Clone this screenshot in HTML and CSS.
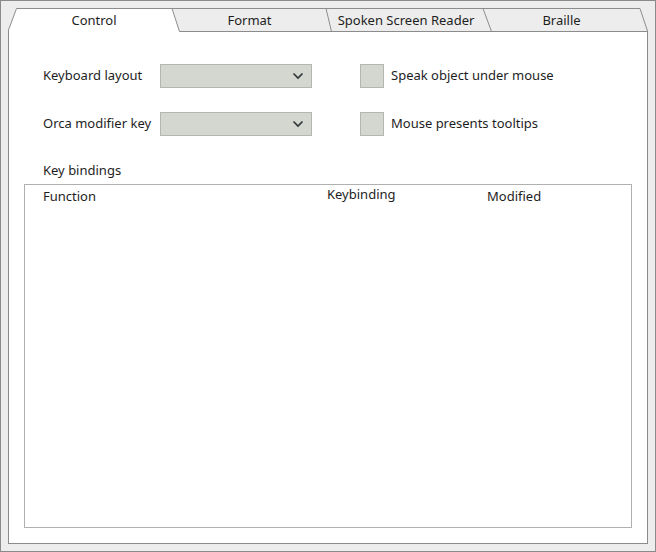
FILE: index.html
```html
<!DOCTYPE html>
<html>
<head>
<meta charset="utf-8">
<link rel="stylesheet" href="styles.css">
</head>
<body>
<div class="window">
  <div class="tabbar">
    <svg class="tab-shapes" width="640" height="24" viewBox="0 0 640 24">
      <polygon points="164,0.5 632,0.5 639.5,23.5 171.5,23.5" fill="#ededed"/>
      <polygon points="0.5,24 0.5,22 8.5,0.5 164,0.5 171.5,24" fill="#ffffff"/>
      <path d="M0.5,24 L0.5,22 L8.5,0.5 L632,0.5 L639.5,23 L639.5,24" fill="none" stroke="#8c8c8c" stroke-width="1"/>
      <path d="M164,0.5 L171.5,23.5 L639.5,23.5" fill="none" stroke="#8c8c8c" stroke-width="1"/>
      <path d="M318,0.5 L323.5,23.5" fill="none" stroke="#8c8c8c" stroke-width="1"/>
      <path d="M475,0.5 L483.5,23.5" fill="none" stroke="#8c8c8c" stroke-width="1"/>
    </svg>
    <div class="tab tab-control">Control</div>
    <div class="tab tab-format">Format</div>
    <div class="tab tab-speech">Spoken Screen Reader</div>
    <div class="tab tab-braille">Braille</div>
  </div>
  <div class="pane">
    <div class="settings">
      <div class="combos">
        <div class="field-label">Keyboard layout</div>
        <div class="combo">
          <svg class="chevron" width="12" height="8" viewBox="0 0 12 8"><path d="M1.5,1.5 L6,6 L10.5,1.5" fill="none" stroke="#2e3436" stroke-width="1.6"/></svg>
        </div>
        <div class="field-label">Orca modifier key</div>
        <div class="combo">
          <svg class="chevron" width="12" height="8" viewBox="0 0 12 8"><path d="M1.5,1.5 L6,6 L10.5,1.5" fill="none" stroke="#2e3436" stroke-width="1.6"/></svg>
        </div>
      </div>
      <div class="checks">
        <div class="check-row"><span class="checkbox"></span><span class="check-label">Speak object under mouse</span></div>
        <div class="check-row"><span class="checkbox"></span><span class="check-label">Mouse presents tooltips</span></div>
      </div>
    </div>
    <div class="section-label">Key bindings</div>
    <div class="bindings">
      <div class="bindings-head">
        <span class="col col-function">Function</span>
        <span class="col col-keybinding">Keybinding</span>
        <span class="col col-modified">Modified</span>
      </div>
    </div>
  </div>
</div>
</body>
</html>
```

FILE: styles.css
```css
* { box-sizing: border-box; }
html, body { margin: 0; padding: 0; }
body {
  font-family: "Noto Sans", "DejaVu Sans", sans-serif;
  font-size: 13px;
  color: #2e3436;
  background: #ededed;
}
.window {
  width: 656px;
  height: 552px;
  border: 1px solid #8a8a8a;
  background: #ededed;
  padding: 7px;
  display: flex;
  flex-direction: column;
}
.tabbar {
  position: relative;
  height: 24px;
  display: flex;
  flex: none;
}
.tab-shapes {
  position: absolute;
  left: 0;
  top: 0;
}
.tab {
  position: relative;
  height: 24px;
  line-height: 25px;
  text-align: center;
  white-space: nowrap;
  color: #1e1e1e;
}
.tab-control { width: 172px; }
.tab-format { width: 139px; }
.tab-speech { width: 174px; }
.tab-braille { width: 137px; }
.pane {
  flex: 1;
  background: #ffffff;
  border: 1px solid #8c8c8c;
  border-top: none;
  padding: 32px 15px 15px 15px;
  display: flex;
  flex-direction: column;
}
.settings {
  display: flex;
  padding-left: 19px;
  gap: 48px;
}
.combos {
  display: grid;
  grid-template-columns: 117px 152px;
  row-gap: 24px;
  align-items: center;
}
.field-label {
  white-space: nowrap;
  color: #1e1e1e;
  line-height: 18px;
  margin-top: -2px;
}
.combo {
  height: 24px;
  background: #d3d7cf;
  border: 1px solid #b4b6b1;
  display: flex;
  align-items: center;
  justify-content: flex-end;
  padding-right: 7px;
}
.chevron { display: block; }
.checks {
  display: flex;
  flex-direction: column;
  gap: 24px;
}
.check-row {
  display: flex;
  align-items: center;
  height: 24px;
  gap: 7px;
}
.checkbox {
  width: 24px;
  height: 24px;
  background: #d3d7cf;
  border: 1px solid #b4b6b1;
  flex: none;
}
.check-label { color: #1e1e1e; white-space: nowrap; line-height: 18px; margin-top: -2px; }
.section-label {
  margin: 25px 0 5px 19px;
  height: 18px;
  line-height: 18px;
  color: #1e1e1e;
}
.bindings {
  flex: 1;
  border: 1px solid #b0b0b0;
}
.bindings-head {
  display: grid;
  grid-template-columns: 284px 160px auto;
  padding: 2px 0 0 18px;
  line-height: 18px;
  color: #1e1e1e;
}
.col-keybinding { margin-top: -2px; }
```
